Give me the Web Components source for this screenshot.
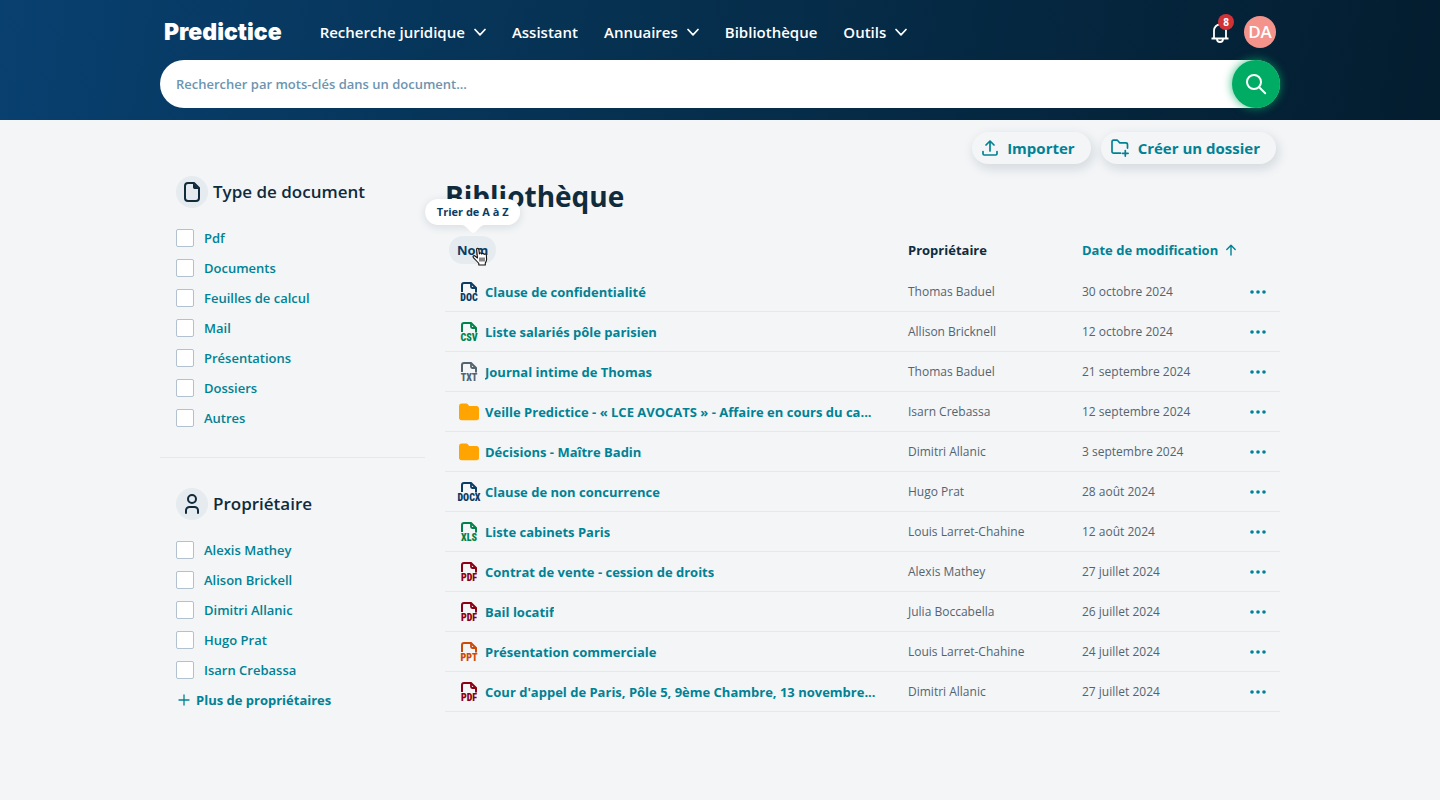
<!DOCTYPE html>
<html lang="fr">
<head>
<meta charset="utf-8">
<meta name="viewport" content="width=device-width, initial-scale=1">
<title>Predictice - Bibliothèque</title>
<style>
  :root {
    --ink: #102b3c;
    --navy: #0b3c64;
    --teal: #008294;
    --muted: #54646f;
    --bg: #f3f5f7;
    --soft: #e5ebef;
    --line: #e5e8ec;
    --field: #b2c1cf;
  }

  body {
    margin: 0;
    min-height: 100vh;
    background: var(--bg);
    color: var(--ink);
    font-family: "Open Sans", sans-serif;
    font-size: 13px;
    line-height: 20px;
  }
</style>
</head>
<body>
<app-header></app-header>

<library-page>
  <pill-button slot="actions" icon="upload">Importer</pill-button>
  <pill-button slot="actions" icon="folder-plus">Créer un dossier</pill-button>

  <filter-group slot="filters" icon="file" heading="Type de document"
    options="Pdf|Documents|Feuilles de calcul|Mail|Présentations|Dossiers|Autres"></filter-group>
  <filter-group slot="filters" icon="person" heading="Propriétaire" more="Plus de propriétaires"
    options="Alexis Mathey|Alison Brickell|Dimitri Allanic|Hugo Prat|Isarn Crebassa"></filter-group>

  <document-table></document-table>
</library-page>

<script>
const ICONS = {
  chevron: [12, 12, `<path d="M1 3.5 6 8.8l5-5.3" fill="none" stroke="currentColor" stroke-width="1.7" stroke-linecap="round" stroke-linejoin="round"/>`],
  bell: [20, 22, `<path d="M4 17V9.500a6 6 0 0 1 12 0V17M1.500 17.500h17" fill="none" stroke="currentColor" stroke-width="1.800" stroke-linejoin="round"/><path d="M7 18a3 3 0 0 0 6 0" fill="none" stroke="currentColor" stroke-width="1.800"/>`],
  search: [22, 22, `<g fill="none" stroke="currentColor" stroke-width="2" stroke-linecap="round"><circle cx="9" cy="9" r="7"/><path d="m14.2 14.2 6 6"/></g>`],
  upload: [16, 16, `<g fill="none" stroke="currentColor" stroke-width="1.7" stroke-linecap="round" stroke-linejoin="round"><path d="M8 11V1.2M4 5l4-4 4 4"/><path d="M1 11.5v2.2c0 .8.5 1.3 1.3 1.3h11.4c.8 0 1.3-.5 1.3-1.3v-2.2"/></g>`],
  "folder-plus": [18, 18, `<g fill="none" stroke="currentColor" stroke-width="1.7" stroke-linecap="round" stroke-linejoin="round"><path d="M9.5 14.2H2.6c-.9 0-1.6-.7-1.6-1.6V3c0-1 .7-1.8 1.6-1.8h3c.5 0 1 .2 1.3.6l1.7 2h6.2c1 0 1.7.7 1.7 1.6v3.7"/><path d="M14.3 11.5v5.6M11.5 14.3h5.6"/></g>`],
  file: [16, 20, `<path d="M10 1H4a3 3 0 0 0-3 3v12a3 3 0 0 0 3 3h8a3 3 0 0 0 3-3V6Z" fill="none" stroke="currentColor" stroke-width="2" stroke-linejoin="round"/><path d="M9 1v4.200C9 6.400 9.800 7 11 7h4Z" fill="currentColor"/>`],
  person: [16, 20, `<g fill="none" stroke="currentColor" stroke-width="2" stroke-linecap="round"><circle cx="8" cy="5" r="4"/><path d="M2 19v-2.500A3.500 3.500 0 0 1 5.500 13h5A3.500 3.500 0 0 1 14 16.500V19"/></g>`],
  plus: [12, 12, `<path d="M6 1v10M1 6h10" fill="none" stroke="currentColor" stroke-width="1.3" stroke-linecap="round"/>`],
  "arrow-up": [12, 12, `<path d="M6 11V1.500M1.800 5.500 6 1.300l4.200 4.200" fill="none" stroke="currentColor" stroke-width="1.400" stroke-linecap="round" stroke-linejoin="round"/>`],
  dots: [16, 4, `<g fill="currentColor"><circle cx="2" cy="2" r="1.800"/><circle cx="8" cy="2" r="1.800"/><circle cx="14" cy="2" r="1.800"/></g>`],
  folder: [20, 18, `<path d="M0 3.500C0 1.500 1 .5 2.500.5H7c1 0 1.500.3 2.200 1.200l1 1.300H17.500C19 3 20 4 20 5.500v9c0 1.700-1 2.800-2.500 2.800h-15C1 17.300 0 16.200 0 14.500Z" fill="#ffa400"/>`],
  sheet: [16, 11, `<path d="M1 10V3a2 2 0 0 1 2-2h7l5 5v4.500" fill="none" stroke="currentColor" stroke-width="2"/><path d="M10 1v3.800c0 .8.400 1.200 1.200 1.200H15" fill="none" stroke="currentColor" stroke-width="1.800"/>`],
  hand: [16, 19, `<path d="M5.500 11 4.700 3.200c-.2-2.600 1.900-2.600 2.200-.2l.5 4c.2-1.500 2.200-1.400 2.400.1.400-1.200 2.200-1 2.300.4.700-1 2.200-.5 2.300.9l.2 4c0 1.600-.8 2.600-1.300 3.600v2H6.800v-1.700C5 14.700 3.500 12.700 1.600 10.800c-1.400-1.500.2-2.800 1.700-1.600Z" fill="#fff" stroke="#111" stroke-width="1.100" stroke-linejoin="round"/><path d="M8 10.500v4M10 10.500v4M12 10.500v4" stroke="#111" stroke-width="1"/>`]
};

class UiIcon extends HTMLElement {
  constructor() {
    super();
    this.attachShadow({ mode: "open" });
  }

  connectedCallback() {
    const [w, h, shape] = ICONS[this.getAttribute("name")];
    this.shadowRoot.innerHTML = `
      <style>
        :host { display: inline-flex; flex: none; }
        svg { display: block; }
      </style>
      <svg width="${w}" height="${h}" viewBox="0 0 ${w} ${h}" aria-hidden="true">${shape}</svg>
    `;
  }
}

class AppHeader extends HTMLElement {
  constructor() {
    super();
    this.attachShadow({ mode: "open" });

    this.shadowRoot.innerHTML = `
      <style>
        :host {
          display: block;
          background: linear-gradient(100deg, #084070 0%, #06304f 45%, #041d2f 100%);
          color: #fff;
        }

        .inner {
          max-width: 1120px;
          margin: 0 auto;
          padding-bottom: 12px;
        }

        .bar {
          display: flex;
          align-items: center;
          height: 60px;
          padding: 4px 4px 0;
          box-sizing: border-box;
        }

        a {
          color: inherit;
          text-decoration: none;
        }

        .logo {
          margin-right: 38px;
          font: 900 23px/28px Inter, sans-serif;
        }

        nav {
          display: flex;
          gap: 26px;
          flex: 1;
        }

        nav a, nav button {
          display: flex;
          align-items: center;
          gap: 9px;
          padding: 0;
          border: 0;
          background: none;
          color: inherit;
          font: 600 15px/24px "Open Sans", sans-serif;
        }

        .bell {
          position: relative;
          display: flex;
          margin-right: 14px;
          padding: 0;
          border: 0;
          background: none;
          color: inherit;
        }

        .badge {
          position: absolute;
          top: -7px;
          right: -4px;
          width: 16px;
          border-radius: 8px;
          background: #d03237;
          text-align: center;
          font: 700 10px/16px "Open Sans", sans-serif;
        }

        .avatar {
          width: 32px;
          border-radius: 50%;
          background: #f3938c;
          text-align: center;
          font-weight: 600;
          font-size: 17px;
          line-height: 32px;
        }

        form {
          display: flex;
          height: 48px;
          border-radius: 24px;
          background: #fff;
        }

        input {
          flex: 1;
          min-width: 0;
          padding: 0 16px;
          border: 0;
          outline: 0;
          background: none;
          color: #102b3c;
          font: 600 13px/20px "Open Sans", sans-serif;
        }

        input::placeholder {
          color: #6c95b0;
          opacity: 1;
        }

        .go {
          display: grid;
          place-items: center;
          width: 48px;
          padding: 0;
          border: 0;
          border-radius: 50%;
          background: #00ab63;
          box-shadow: 0 0 10px rgba(0, 171, 99, .8);
          color: #fff;
        }
      </style>

      <header class="inner">
        <div class="bar">
          <a class="logo" href="#">Predictice</a>
          <nav>
            <button type="button">Recherche juridique <ui-icon name="chevron"></ui-icon></button>
            <a href="#">Assistant</a>
            <button type="button">Annuaires <ui-icon name="chevron"></ui-icon></button>
            <a href="#">Bibliothèque</a>
            <button type="button">Outils <ui-icon name="chevron"></ui-icon></button>
          </nav>
          <button class="bell" type="button" aria-label="Notifications">
            <ui-icon name="bell"></ui-icon>
            <span class="badge">8</span>
          </button>
          <div class="avatar">DA</div>
        </div>
        <form role="search">
          <input type="text" aria-label="Rechercher" placeholder="Rechercher par mots-clés dans un document...">
          <button class="go" type="button" aria-label="Lancer la recherche"><ui-icon name="search"></ui-icon></button>
        </form>
      </header>
    `;
  }
}

class PillButton extends HTMLElement {
  constructor() {
    super();
    this.attachShadow({ mode: "open" });
  }

  connectedCallback() {
    this.shadowRoot.innerHTML = `
      <style>
        :host { display: block; }

        button {
          display: flex;
          align-items: center;
          gap: 9px;
          height: 32px;
          padding: 0 16px 0 10px;
          border: 0;
          border-radius: 16px;
          background: var(--bg);
          box-shadow: 2px 4px 12px rgba(16, 43, 60, .15);
          color: var(--teal);
          font: 700 15px/24px "Open Sans", sans-serif;
        }
      </style>
      <button type="button"><ui-icon name="${this.getAttribute("icon")}"></ui-icon><slot></slot></button>
    `;
  }
}

class LibraryPage extends HTMLElement {
  constructor() {
    super();
    this.attachShadow({ mode: "open" });

    this.shadowRoot.innerHTML = `
      <style>
        :host {
          display: block;
          max-width: 1120px;
          margin: 0 auto;
          padding-top: 12px;
        }

        .actions {
          display: flex;
          justify-content: flex-end;
          gap: 10px;
          padding-right: 4px;
        }

        .columns {
          display: grid;
          grid-template-columns: 265px minmax(0, 1fr);
          gap: 20px;
        }

        h1 {
          margin: 12px 0 0;
          font-size: 28px;
          line-height: 40px;
        }
      </style>

      <div class="actions"><slot name="actions"></slot></div>
      <div class="columns">
        <aside><slot name="filters"></slot></aside>
        <main>
          <h1>Bibliothèque</h1>
          <slot></slot>
        </main>
      </div>
    `;
  }
}

class FilterGroup extends HTMLElement {
  constructor() {
    super();
    this.attachShadow({ mode: "open" });
  }

  connectedCallback() {
    const more = this.getAttribute("more");
    const options = this.getAttribute("options").split("|");

    this.shadowRoot.innerHTML = `
      <style>
        :host {
          display: block;
          padding: 12px 16px 24px;
        }

        :host(:not(:first-of-type)) {
          border-top: 1px solid var(--line);
          padding-top: 30px;
        }

        h2 {
          display: flex;
          align-items: center;
          gap: 5px;
          margin: 0 0 15px;
          font-weight: 600;
          font-size: 17px;
          line-height: 24px;
        }

        .round {
          display: grid;
          place-items: center;
          width: 32px;
          height: 32px;
          border-radius: 50%;
          background: var(--soft);
        }

        label {
          display: flex;
          align-items: center;
          gap: 10px;
          height: 30px;
          color: var(--teal);
          font-weight: 600;
        }

        input {
          appearance: none;
          width: 18px;
          height: 18px;
          margin: 0;
          border: 1px solid var(--field);
          border-radius: 2px;
          background: #fff;
        }

        input:checked {
          background: var(--teal);
        }

        .more {
          display: flex;
          align-items: center;
          gap: 6px;
          height: 30px;
          padding: 0 2px;
          border: 0;
          background: none;
          color: var(--teal);
          font: 700 13px/20px "Open Sans", sans-serif;
        }
      </style>

      <h2><span class="round"><ui-icon name="${this.getAttribute("icon")}"></ui-icon></span>${this.getAttribute("heading")}</h2>
      ${options.map(text => `<label><input type="checkbox">${text}</label>`).join("")}
      ${more ? `<button class="more" type="button"><ui-icon name="plus"></ui-icon>${more}</button>` : ""}
    `;
  }
}

const TYPE_COLORS = {
  DOC: "#0b3c64",
  DOCX: "#0b3c64",
  CSV: "#00824a",
  XLS: "#00824a",
  TXT: "#54646f",
  PDF: "#8c0013",
  PPT: "#cc4b0a"
};

class FileType extends HTMLElement {
  constructor() {
    super();
    this.attachShadow({ mode: "open" });
  }

  connectedCallback() {
    const type = this.getAttribute("type");
    this.shadowRoot.innerHTML = `
      <style>
        :host {
          display: flex;
          flex-direction: column;
          align-items: center;
          flex: none;
          width: 24px;
          color: ${TYPE_COLORS[type] || "inherit"};
        }

        ui-icon[name="sheet"] {
          padding-top: 2px;
        }

        span {
          font: 900 10px/10px "Roboto Condensed", Roboto, sans-serif;
        }
      </style>
      ${type === "folder"
        ? `<ui-icon name="folder"></ui-icon>`
        : `<ui-icon name="sheet"></ui-icon><span>${type}</span>`}
    `;
  }
}

class HintBubble extends HTMLElement {
  constructor() {
    super();
    this.attachShadow({ mode: "open" });

    this.shadowRoot.innerHTML = `
      <style>
        :host {
          display: block;
          padding: 0 12px;
          border-radius: 13px;
          background: #fff;
          box-shadow: 0 2px 10px rgba(16, 43, 60, .12);
          color: var(--navy);
          font-weight: 700;
          font-size: 11px;
          line-height: 26px;
          white-space: nowrap;
        }

        svg {
          position: absolute;
          top: 100%;
          left: 50%;
          margin-left: -12px;
        }
      </style>
      <slot></slot>
      <svg width="24" height="8" viewBox="0 0 24 8" aria-hidden="true"><path d="M0 0h24c-3 0-4.500 1.500-6 3l-3.500 3.800c-1.500 1.500-3.500 1.500-5 0L6 3C4.500 1.500 3 0 0 0Z" fill="#fff"/></svg>
    `;
  }
}

const DOCUMENTS = [
  ["DOC", "Clause de confidentialité", "Thomas Baduel", "30 octobre 2024"],
  ["CSV", "Liste salariés pôle parisien", "Allison Bricknell", "12 octobre 2024"],
  ["TXT", "Journal intime de Thomas", "Thomas Baduel", "21 septembre 2024"],
  ["folder", "Veille Predictice - « LCE AVOCATS » - Affaire en cours du ca...", "Isarn Crebassa", "12 septembre 2024"],
  ["folder", "Décisions - Maître Badin", "Dimitri Allanic", "3 septembre 2024"],
  ["DOCX", "Clause de non concurrence", "Hugo Prat", "28 août 2024"],
  ["XLS", "Liste cabinets Paris", "Louis Larret-Chahine", "12 août 2024"],
  ["PDF", "Contrat de vente - cession de droits", "Alexis Mathey", "27 juillet 2024"],
  ["PDF", "Bail locatif", "Julia Boccabella", "26 juillet 2024"],
  ["PPT", "Présentation commerciale", "Louis Larret-Chahine", "24 juillet 2024"],
  ["PDF", "Cour d'appel de Paris, Pôle 5, 9ème Chambre, 13 novembre...", "Dimitri Allanic", "27 juillet 2024"]
];

class DocumentTable extends HTMLElement {
  constructor() {
    super();
    this.attachShadow({ mode: "open" });

    this.shadowRoot.innerHTML = `
      <style>
        :host {
          display: block;
          margin-top: 12px;
        }

        table {
          width: 100%;
          table-layout: fixed;
          border-collapse: separate;
          border-spacing: 0;
        }

        th, td {
          box-sizing: border-box;
          padding: 0;
          text-align: left;
          white-space: nowrap;
        }

        th {
          height: 44px;
          font-weight: 700;
        }

        td {
          height: 40px;
          border-bottom: 1px solid var(--line);
          color: var(--muted);
          font-size: 12px;
        }

        .owner { width: 174px; }
        .date { width: 168px; }
        .menu { width: 30px; }

        th button {
          display: flex;
          align-items: center;
          gap: 7px;
          padding: 0;
          border: 0;
          background: none;
          color: var(--teal);
          font: 700 13px/20px "Open Sans", sans-serif;
        }

        .sort {
          position: relative;
          width: max-content;
          margin-left: 4px;
        }

        .sort button {
          height: 28px;
          padding: 0 8px;
          border-radius: 14px;
          background: var(--soft);
          color: var(--navy);
        }

        hint-bubble {
          position: absolute;
          bottom: 39px;
          left: 50%;
          transform: translateX(-50%);
        }

        .cursor {
          position: absolute;
          left: 23px;
          top: 11px;
        }

        .name {
          display: flex;
          align-items: center;
          gap: 4px;
          padding: 0 16px 0 12px;
        }

        .name a {
          overflow: hidden;
          text-overflow: ellipsis;
          color: var(--teal);
          font-weight: 700;
          font-size: 13px;
          line-height: 20px;
          text-decoration: none;
        }

        .menu button {
          display: flex;
          align-items: center;
          height: 24px;
          padding: 0;
          border: 0;
          background: none;
          color: var(--teal);
        }
      </style>

      <table>
        <thead>
          <tr>
            <th>
              <div class="sort">
                <button type="button">Nom</button>
                <hint-bubble role="tooltip">Trier de A à Z</hint-bubble>
                <ui-icon class="cursor" name="hand"></ui-icon>
              </div>
            </th>
            <th class="owner">Propriétaire</th>
            <th class="date"><button type="button">Date de modification <ui-icon name="arrow-up"></ui-icon></button></th>
            <th class="menu"></th>
          </tr>
        </thead>
        <tbody>
          ${DOCUMENTS.map(([type, name, owner, date]) => `
            <tr>
              <td><div class="name"><file-type type="${type}"></file-type><a href="#">${name}</a></div></td>
              <td>${owner}</td>
              <td>${date}</td>
              <td class="menu"><button type="button" aria-label="Actions"><ui-icon name="dots"></ui-icon></button></td>
            </tr>`).join("")}
        </tbody>
      </table>
    `;
  }
}

customElements.define("ui-icon", UiIcon);
customElements.define("file-type", FileType);
customElements.define("hint-bubble", HintBubble);
customElements.define("pill-button", PillButton);
customElements.define("filter-group", FilterGroup);
customElements.define("document-table", DocumentTable);
customElements.define("library-page", LibraryPage);
customElements.define("app-header", AppHeader);
</script>
</body>
</html>
